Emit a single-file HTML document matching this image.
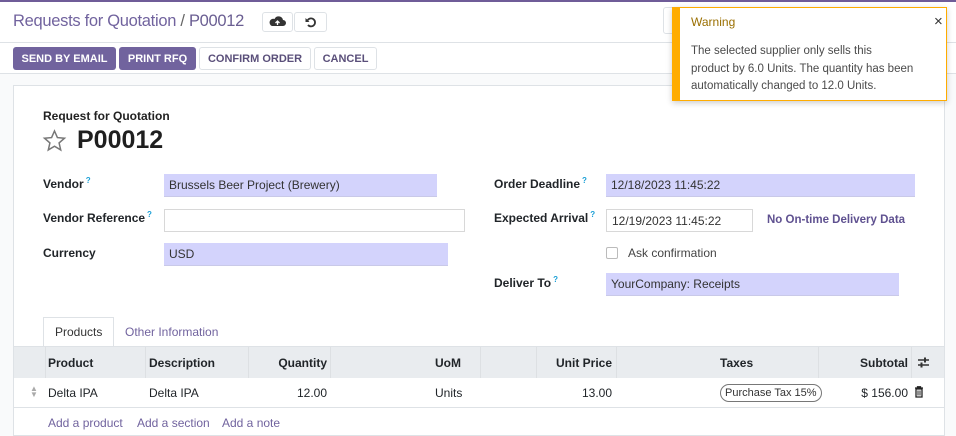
<!DOCTYPE html>
<html><head><meta charset="utf-8"><style>
*{box-sizing:border-box;margin:0;padding:0}
body{width:956px;height:436px;overflow:hidden;background:#fff;font-family:"Liberation Sans",sans-serif;font-size:12px;color:#212529;position:relative}
.a{position:absolute;white-space:nowrap}
.btn{position:absolute;height:23px;border-radius:3px;font-size:11px;font-weight:bold;display:flex;align-items:center;justify-content:center;letter-spacing:0}
.pb{background:#71639e;color:#fff}
.wb{background:#fff;border:1px solid #dee2e6;color:#555}
.lbl{position:absolute;font-weight:bold;font-size:12px;color:#212529}
.lbl sup{color:#1a9fd6;font-size:8px;margin-left:2px}
.inp{position:absolute;height:23px;background:#d3d3fc;border-bottom:1px solid #c9c9e8;font-size:12px;padding:4px 5px;color:#333}
.inw{background:#fff;border:1px solid #d8d8d8}
.th{position:absolute;top:356px;font-weight:bold;font-size:12px}
.td{position:absolute;top:386px;font-size:12px}
.sep{position:absolute;top:347px;height:31px;width:1px;background:#dde0e3}
</style></head><body>
<div class="a" style="left:0;top:0;width:956px;height:2px;background:#6f5c98"></div>
<div class="a" style="left:13px;top:12px;font-size:16.5px;letter-spacing:-0.3px;color:#71639e">Requests for Quotation <span style="color:#666">/</span> <span style="color:#6a5e92">P00012</span></div>
<div class="a" style="left:262px;top:12px;width:31px;height:20px;border:1px solid #dee2e6;border-radius:3px;background:#fff"><svg width="31" height="18" viewBox="0 0 31 18" style="position:absolute;left:-1px;top:0"><path d="M10 13h11a3 3 0 0 0 0-6 4.5 4.5 0 0 0-8.5-1A3.5 3.5 0 0 0 10 13z" fill="#333"/><path d="M15.5 12V8M13.5 10l2-2 2 2" stroke="#fff" stroke-width="1.3" fill="none"/></svg></div>
<div class="a" style="left:294px;top:12px;width:33px;height:20px;border:1px solid #dee2e6;border-radius:3px"><svg width="33" height="18" viewBox="0 0 33 18" style="position:absolute;left:-1px;top:0"><path d="M13.5 7.5A4 4 0 1 1 14 12" stroke="#333" stroke-width="1.8" fill="none"/><path d="M11.5 5v4h4z" fill="#333"/></svg></div>
<div class="a" style="left:663px;top:7px;width:20px;height:27px;border:1px solid #dee2e6;border-radius:3px"></div>
<div class="a" style="left:0;top:42px;width:956px;height:1px;background:#dee2e6"></div>
<div class="btn pb" style="left:13px;top:47px;width:103px">SEND BY EMAIL</div>
<div class="btn pb" style="left:119px;top:47px;width:77px">PRINT RFQ</div>
<div class="btn wb" style="left:199px;top:47px;width:112px;color:#5a4f7a">CONFIRM ORDER</div>
<div class="btn wb" style="left:314px;top:47px;width:63px;color:#5a4f7a">CANCEL</div>
<div class="a" style="left:0;top:73px;width:956px;height:363px;background:#f9fafb;border-top:1px solid #dee2e6"></div>
<div class="a" style="left:13px;top:85px;width:932px;height:351px;background:#fff;border:1px solid #dee2e6"></div>
<div class="a" style="left:43px;top:109px;font-size:12px;font-weight:bold;color:#222">Request for Quotation</div>
<svg class="a" style="left:42px;top:129px" width="25" height="24" viewBox="0 0 24 24"><path d="M12 2l2.9 6.6 7.1.6-5.4 4.7 1.6 7-6.2-3.7-6.2 3.7 1.6-7L2 9.2l7.1-.6z" fill="none" stroke="#777" stroke-width="1.5"/></svg>
<div class="a" style="left:77px;top:126px;font-size:25px;font-weight:bold;color:#1f1f1f">P00012</div>

<div class="lbl" style="left:43px;top:176px">Vendor<sup>?</sup></div>
<div class="inp" style="left:164px;top:174px;width:273px">Brussels Beer Project (Brewery)</div>
<div class="lbl" style="left:43px;top:210px">Vendor Reference<sup>?</sup></div>
<div class="inp inw" style="left:164px;top:209px;width:301px"></div>
<div class="lbl" style="left:43px;top:246px">Currency</div>
<div class="inp" style="left:164px;top:243px;width:284px">USD</div>

<div class="lbl" style="left:494px;top:176px">Order Deadline<sup>?</sup></div>
<div class="inp" style="left:606px;top:174px;width:309px">12/18/2023 11:45:22</div>
<div class="lbl" style="left:494px;top:210px">Expected Arrival<sup>?</sup></div>
<div class="inp inw" style="left:606px;top:209px;width:147px">12/19/2023 11:45:22</div>
<div class="a" style="left:767px;top:214px;font-weight:bold;color:#5f5190;font-size:11.5px">No On-time Delivery Data</div>
<div class="a" style="left:606px;top:247px;width:12px;height:12px;border:1px solid #bbb;border-radius:2px"></div>
<div class="a" style="left:628px;top:246px;color:#444">Ask confirmation</div>
<div class="lbl" style="left:494px;top:275px">Deliver To<sup>?</sup></div>
<div class="inp" style="left:606px;top:273px;width:293px">YourCompany: Receipts</div>

<div class="a" style="left:43px;top:317px;width:71px;height:30px;border:1px solid #dee2e6;border-bottom:none;background:#fff"></div>
<div class="a" style="left:55px;top:325px;color:#333">Products</div>
<div class="a" style="left:125px;top:325px;color:#71639e">Other Information</div>
<div class="a" style="left:14px;top:346px;width:930px;height:32px;background:#e9ecef;border-top:1px solid #dee2e6"></div>
<div class="sep" style="left:45px"></div><div class="sep" style="left:145px"></div><div class="sep" style="left:248px"></div><div class="sep" style="left:330px"></div><div class="sep" style="left:480px"></div><div class="sep" style="left:536px"></div><div class="sep" style="left:616px"></div><div class="sep" style="left:818px"></div><div class="sep" style="left:911px"></div>
<div class="th" style="left:48px">Product</div>
<div class="th" style="left:149px">Description</div>
<div class="th" style="left:246px;width:81px;text-align:right">Quantity</div>
<div class="th" style="left:435px">UoM</div>
<div class="th" style="left:530px;width:82px;text-align:right">Unit Price</div>
<div class="th" style="left:720px">Taxes</div>
<div class="th" style="left:830px;width:78px;text-align:right">Subtotal</div>
<svg class="a" style="left:917px;top:356px" width="13" height="13" viewBox="0 0 13 13"><path d="M1 4h11M1 9h11" stroke="#333" stroke-width="1.5"/><rect x="7" y="1.5" width="2" height="5" fill="#333"/><rect x="3.5" y="6.5" width="2" height="5" fill="#333"/></svg>
<div class="a" style="left:14px;top:378px;width:930px;height:30px;background:#fff;border-bottom:1px solid #dee2e6"></div>
<div class="a" style="left:30px;top:386px;color:#aaa;font-size:8px;line-height:6px">▲<br>▼</div>
<div class="td" style="left:48px">Delta IPA</div>
<div class="td" style="left:149px">Delta IPA</div>
<div class="td" style="left:246px;width:81px;text-align:right">12.00</div>
<div class="td" style="left:435px">Units</div>
<div class="td" style="left:530px;width:82px;text-align:right">13.00</div>
<div class="a" style="left:720px;top:384px;height:18px;border:1px solid #777;border-radius:9px;padding:2px 4px;font-size:11px;color:#333">Purchase Tax 15%</div>
<div class="td" style="left:830px;width:78px;text-align:right">$ 156.00</div>
<svg class="a" style="left:914px;top:386px" width="10" height="12" viewBox="0 0 10 12"><path d="M1 2h8M3.5 2V.8h3V2M2 3h6v8H2z" stroke="#222" stroke-width="1.3" fill="none"/><path d="M4 4.5v5M6 4.5v5" stroke="#222"/></svg>
<div class="a" style="left:48px;top:416px;color:#71639e">Add a product</div>
<div class="a" style="left:137px;top:416px;color:#71639e">Add a section</div>
<div class="a" style="left:222px;top:416px;color:#71639e">Add a note</div>

<div class="a" style="left:672px;top:7px;width:275px;height:94px;background:#fff;border:1px solid #ffac00;box-shadow:0 2px 6px rgba(0,0,0,.2)"></div>
<div class="a" style="left:672px;top:7px;width:8px;height:94px;background:#ffac00"></div>
<div class="a" style="left:691px;top:15px;color:#9a6f00;font-size:12px">Warning</div>
<div class="a" style="left:934px;top:13px;font-size:15px;color:#333">×</div>
<div class="a" style="left:691px;top:43px;color:#4a4a4a;font-size:11.5px;line-height:17.5px">The selected supplier only sells this<br>product by 6.0 Units. The quantity has been<br>automatically changed to 12.0 Units.</div>
</body></html>
